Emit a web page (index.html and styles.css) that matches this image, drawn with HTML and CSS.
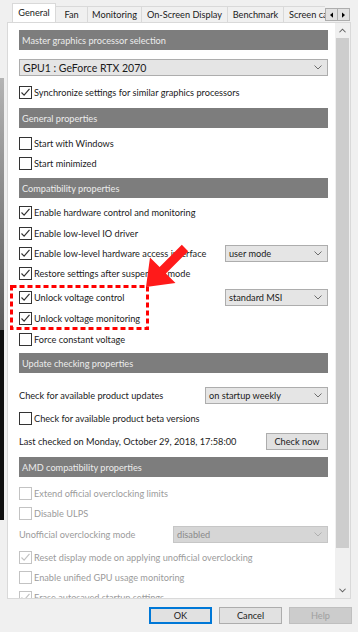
FILE: index.html
```html
<!DOCTYPE html>
<html lang="en">
<head>
  <meta charset="UTF-8" />
  <meta name="viewport" content="width=device-width, initial-scale=1.0" />
  <title>Properties - General</title>
  <link rel="stylesheet" href="styles.css">
</head>
<body>
  <div class="window">
    <!-- Tab strip -->
    <div class="tabs">
      <div class="tab-strip">
        <div class="tab tab-general active">General</div>
        <div class="tab tab-fan">Fan</div>
        <div class="tab tab-mon">Monitoring</div>
        <div class="tab tab-osd">On-Screen Display</div>
        <div class="tab tab-bench">Benchmark</div>
        <div class="tab tab-cap">Screen capture</div>
      </div>
      <div class="tab-arrows">
        <span class="tab-arrow"><svg viewBox="0 0 4 7"><path d="M4 0v7L0 3.5z"/></svg></span>
        <span class="tab-arrow"><svg viewBox="0 0 4 7"><path d="M0 0v7l4-3.5z"/></svg></span>
      </div>
    </div>

    <!-- Tab page -->
    <div class="panel">
      <div class="page">
        <div class="title mt7">Master graphics processor selection</div>
        <div class="combo combo-full mt9">GPU1 : GeForce RTX 2070<svg class="chev" viewBox="0 0 8 5"><path d="M0.5 0.5l3.5 3.5 3.5-3.5"/></svg></div>
        <div class="row mt6"><span class="box on"><svg viewBox="0 0 11 11"><path d="M1.5 5.5l2.6 2.6 5.4-6.2"/></svg></span>Synchronize settings for similar graphics processors</div>

        <div class="title mt6">General properties</div>
        <div class="row mt5"><span class="box"></span>Start with Windows</div>
        <div class="row"><span class="box"></span>Start minimized</div>

        <div class="title mt5">Compatibility properties</div>
        <div class="row mt4"><span class="box on"><svg viewBox="0 0 11 11"><path d="M1.5 5.5l2.6 2.6 5.4-6.2"/></svg></span>Enable hardware control and monitoring</div>
        <div class="row mt1"><span class="box on"><svg viewBox="0 0 11 11"><path d="M1.5 5.5l2.6 2.6 5.4-6.2"/></svg></span>Enable low-level IO driver</div>
        <div class="row"><span class="box on"><svg viewBox="0 0 11 11"><path d="M1.5 5.5l2.6 2.6 5.4-6.2"/></svg></span><span class="label">Enable low-level hardware access interface</span>
          <div class="combo combo-sm">user mode<svg class="chev" viewBox="0 0 8 5"><path d="M0.5 0.5l3.5 3.5 3.5-3.5"/></svg></div>
        </div>
        <div class="row"><span class="box on"><svg viewBox="0 0 11 11"><path d="M1.5 5.5l2.6 2.6 5.4-6.2"/></svg></span>Restore settings after suspended mode</div>
        <div class="row mt4"><span class="box on"><svg viewBox="0 0 11 11"><path d="M1.5 5.5l2.6 2.6 5.4-6.2"/></svg></span><span class="label">Unlock voltage control</span>
          <div class="combo combo-sm">standard MSI<svg class="chev" viewBox="0 0 8 5"><path d="M0.5 0.5l3.5 3.5 3.5-3.5"/></svg></div>
        </div>
        <div class="row mt1"><span class="box on"><svg viewBox="0 0 11 11"><path d="M1.5 5.5l2.6 2.6 5.4-6.2"/></svg></span>Unlock voltage monitoring</div>
        <div class="row mt1"><span class="box"></span>Force constant voltage</div>

        <div class="title mt4">Update checking properties</div>
        <div class="row mt12"><span class="label">Check for available product updates</span>
          <div class="combo combo-md">on startup weekly<svg class="chev" viewBox="0 0 8 5"><path d="M0.5 0.5l3.5 3.5 3.5-3.5"/></svg></div>
        </div>
        <div class="row mt3"><span class="box"></span>Check for available product beta versions</div>
        <div class="row mt3"><span class="label">Last checked on Monday, October 29, 2018, 17:58:00</span>
          <button class="btn btn-check">Check now</button>
        </div>

        <div class="title mt6">AMD compatibility properties</div>
        <div class="row off mt6"><span class="box"></span>Extend official overclocking limits</div>
        <div class="row off"><span class="box"></span>Disable ULPS</div>
        <div class="row off mt1"><span class="label">Unofficial overclocking mode</span>
          <div class="combo combo-lg">disabled<svg class="chev" viewBox="0 0 8 5"><path d="M0.5 0.5l3.5 3.5 3.5-3.5"/></svg></div>
        </div>
        <div class="row off mt3"><span class="box on"><svg viewBox="0 0 11 11"><path d="M1.5 5.5l2.6 2.6 5.4-6.2"/></svg></span>Reset display mode on applying unofficial overclocking</div>
        <div class="row off"><span class="box"></span>Enable unified GPU usage monitoring</div>
        <div class="row off"><span class="box on"><svg viewBox="0 0 11 11"><path d="M1.5 5.5l2.6 2.6 5.4-6.2"/></svg></span>Erase autosaved startup settings</div>
      </div>

      <div class="scrollbar">
        <div class="sb-btn"><svg viewBox="0 0 8 5"><path d="M0.5 4.5l3.5-3.5 3.5 3.5"/></svg></div>
        <div class="sb-thumb"></div>
        <div class="sb-track"></div>
        <div class="sb-btn"><svg viewBox="0 0 8 5"><path d="M0.5 0.5l3.5 3.5 3.5-3.5"/></svg></div>
      </div>
    </div>

    <!-- Dialog buttons -->
    <div class="buttons">
      <button class="btn btn-ok">OK</button>
      <button class="btn">Cancel</button>
      <button class="btn btn-off">Help</button>
    </div>
  </div>

  <!-- Screenshot annotation -->
  <svg class="annotation" viewBox="0 0 358 632">
    <rect x="11.5" y="286.5" width="136" height="42" fill="none" stroke="#ff0000" stroke-width="3" stroke-dasharray="5 3"/>
    <polygon fill="#ff1a1a" points="146,287 150,257.5 159.6,267.1 181.8,244.8 188.2,251.2 165.9,273.4 175.5,283"/>
  </svg>
</body>
</html>
```

FILE: styles.css
```css
* {
  box-sizing: border-box;
}

body {
  margin: 0;
  width: 358px;
  height: 632px;
  overflow: hidden;
  position: relative;
  font-family: Lato, "Noto Sans", sans-serif;
  font-size: 9.2px;
  color: #1b1b1b;
  background:
    linear-gradient(#f0f0f0 0, #f0f0f0 78px, #b4b4b4 78px, #5a5a5a 330px, #101010 330px, #101010 520px, #f0f0f0 520px) 0 0 / 4px 100% no-repeat,
    #f0f0f0;
}

.window {
  margin-left: 7px;
  width: 344px;
}

/* tabs */
.tabs {
  display: flex;
  height: 22px;
  padding-left: 5px;
}

.tab-strip {
  display: flex;
  align-items: flex-end;
  width: 313px;
  overflow: hidden;
}

.tab {
  flex: none;
  height: 16px;
  margin-right: -1px;
  border: 1px solid #d9d9d9;
  border-bottom: none;
  background: #f0f0f0;
  display: flex;
  align-items: center;
  justify-content: center;
  white-space: nowrap;
}

.tab.active {
  position: relative;
  z-index: 1;
  height: 20px;
  margin-bottom: -1px;
  padding-bottom: 2px;
  background: #fff;
}

.tab-general { width: 44px; }
.tab-fan { width: 33px; }
.tab-mon { width: 55px; }
.tab-osd { width: 87px; }
.tab-bench { width: 57px; }
.tab-cap { width: 60px; justify-content: flex-start; padding-left: 5px; }

.tab-arrows {
  display: flex;
  padding-top: 8px;
}

.tab-arrow {
  width: 13px;
  height: 13px;
  border: 1px solid #adadad;
  background: #e1e1e1;
  display: flex;
  align-items: center;
  justify-content: center;
  margin-right: -1px;
}

.tab-arrow svg {
  width: 3px;
  height: 6px;
  fill: #000;
}

/* page */
.panel {
  display: flex;
  height: 577px;
  border: 1px solid #d9d9d9;
  background: #fff;
}

.page {
  flex: 1;
  padding: 0 7px 0 11px;
  overflow: hidden;
}

.title {
  height: 20px;
  padding-left: 3px;
  background: #7d7d7d;
  color: #ececec;
  display: flex;
  align-items: center;
}

.row {
  height: 20px;
  display: flex;
  align-items: center;
  white-space: nowrap;
}

.row .label {
  flex: 1;
}

.box {
  flex: none;
  width: 13px;
  height: 13px;
  margin-right: 2px;
  border: 1px solid #333;
  background: #fff;
}

.box svg {
  display: block;
  width: 11px;
  height: 11px;
  fill: none;
  stroke: #333;
  stroke-width: 1.2;
}

.row.off {
  color: #9b9b9b;
}

.row.off .box {
  border-color: #c3c3c3;
}

.row.off .box svg {
  stroke: #c3c3c3;
}

.combo {
  flex: none;
  height: 17px;
  padding-left: 3px;
  border: 1px solid #adadad;
  background: #e5e5e5;
  display: flex;
  align-items: center;
  justify-content: space-between;
}

.combo-full {
  font-size: 10.5px;
}

.combo-sm { width: 103px; }
.combo-md { width: 123px; }
.combo-lg { width: 155px; }

.row.off .combo {
  background: #d6d6d6;
  border-color: #c6c6c6;
  color: #8a8a8a;
}

.chev {
  width: 8px;
  height: 5px;
  margin-right: 5px;
  fill: none;
  stroke: #6d6d6d;
  stroke-width: 1;
}

.row.off .chev {
  stroke: #b0b0b0;
}

.btn {
  height: 17px;
  width: 63px;
  padding: 0;
  border: 1px solid #adadad;
  background: #e1e1e1;
  font-family: inherit;
  font-size: inherit;
  color: #1b1b1b;
}

.btn-check {
  width: 62px;
}

.btn-ok {
  border: 2px solid #0078d7;
}

.btn-off {
  background: #cccccc;
  border-color: #bfbfbf;
  color: #a0a0a0;
}

/* scrollbar */
.scrollbar {
  width: 15px;
  background: #f0f0f0;
  display: flex;
  flex-direction: column;
}

.sb-btn {
  height: 15px;
  display: flex;
  align-items: center;
  justify-content: center;
}

.sb-btn svg {
  width: 7px;
  height: 5px;
  fill: none;
  stroke: #606060;
  stroke-width: 1.2;
}

.sb-thumb {
  height: 510px;
  margin: 0 1px;
  background: #cdcdcd;
}

.sb-track {
  flex: 1;
}

/* dialog buttons */
.buttons {
  display: flex;
  justify-content: flex-end;
  gap: 7px;
  margin-top: 8px;
  margin-right: -1px;
}

.annotation {
  position: absolute;
  left: 0;
  top: 0;
  width: 358px;
  height: 632px;
  pointer-events: none;
}

/* spacing */
.mt1 { margin-top: 1px; }
.mt3 { margin-top: 3px; }
.mt4 { margin-top: 4px; }
.mt5 { margin-top: 5px; }
.mt6 { margin-top: 6px; }
.mt7 { margin-top: 7px; }
.mt9 { margin-top: 9px; }
.mt12 { margin-top: 12px; }
```
